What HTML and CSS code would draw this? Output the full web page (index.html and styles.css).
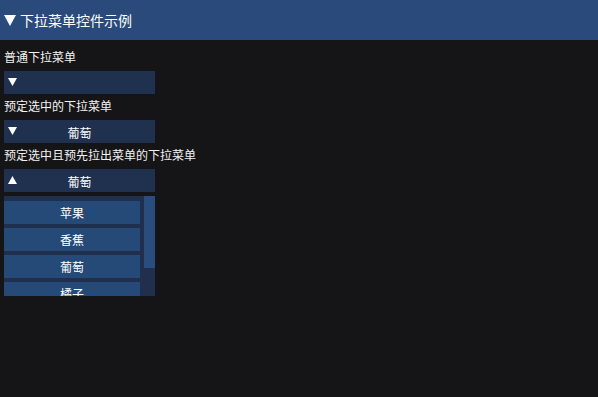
FILE: index.html
```html
<!DOCTYPE html>
<html lang="zh">
<head>
<meta charset="utf-8">
<link rel="stylesheet" href="styles.css">
</head>
<body>
<div class="header">
  <svg class="hdr-arrow" width="12" height="12" viewBox="0 0 12 12"><polygon points="0,1 12,1 6,12" fill="#fff"/></svg>
  <span class="title">下拉菜单控件示例</span>
</div>
<div class="content">
  <div class="label">普通下拉菜单</div>
  <div class="combo">
    <svg class="arrow" width="9" height="8" viewBox="0 0 9 8"><polygon points="0,0 9,0 4.5,8" fill="#fff"/></svg>
    <span class="value"></span>
  </div>
  <div class="label">预定选中的下拉菜单</div>
  <div class="combo">
    <svg class="arrow" width="9" height="8" viewBox="0 0 9 8"><polygon points="0,0 9,0 4.5,8" fill="#fff"/></svg>
    <span class="value">葡萄</span>
  </div>
  <div class="label">预定选中且预先拉出菜单的下拉菜单</div>
  <div class="combo">
    <svg class="arrow" width="9" height="8" viewBox="0 0 9 8"><polygon points="0,8 9,8 4.5,0" fill="#fff"/></svg>
    <span class="value">葡萄</span>
  </div>
  <div class="popup">
    <div class="list">
      <div class="item">苹果</div>
      <div class="item">香蕉</div>
      <div class="item">葡萄</div>
      <div class="item">橘子</div>
    </div>
    <div class="scrollbar"><div class="thumb"></div></div>
  </div>
</div>
</body>
</html>
```
FILE: styles.css
```css
html, body {
  margin: 0;
  padding: 0;
  background: #151517;
  width: 598px;
  height: 397px;
  overflow: hidden;
  font-family: "Noto Sans CJK SC", "Noto Sans", sans-serif;
  color: #f2f2f2;
}
.header {
  height: 40px;
  background: #294a7a;
  display: flex;
  align-items: center;
  padding-left: 4px;
  gap: 4px;
}
.hdr-arrow {
  display: block;
  margin-top: -1px;
}
.title {
  font-size: 14px;
  line-height: 16px;
  color: #fff;
}
.content {
  padding: 9px 4px 0;
  display: flex;
  flex-direction: column;
  width: 151px;
}
.label {
  font-size: 12px;
  line-height: 16px;
  height: 16px;
  white-space: nowrap;
  margin-bottom: 6px;
}
.combo {
  height: 23px;
  background: #203150;
  position: relative;
  display: flex;
  align-items: center;
  justify-content: center;
  margin-bottom: 4px;
}
.combo .arrow {
  position: absolute;
  left: 4px;
  top: 7px;
}
.value {
  font-size: 12px;
  line-height: 16px;
  color: #fff;
  padding-top: 2px;
}
.popup {
  height: 100px;
  background: #1f2f4d;
  display: flex;
  justify-content: space-between;
  overflow: hidden;
  margin-top: 0;
}
.list {
  width: 136px;
  padding-top: 5px;
  display: flex;
  flex-direction: column;
  gap: 4px;
}
.item {
  height: 23px;
  flex-shrink: 0;
  background: #264a78;
  font-size: 12px;
  line-height: 23px;
  text-align: center;
  color: #fff;
}
.scrollbar {
  width: 11px;
}
.thumb {
  height: 72px;
  background: #294e7e;
}
```
